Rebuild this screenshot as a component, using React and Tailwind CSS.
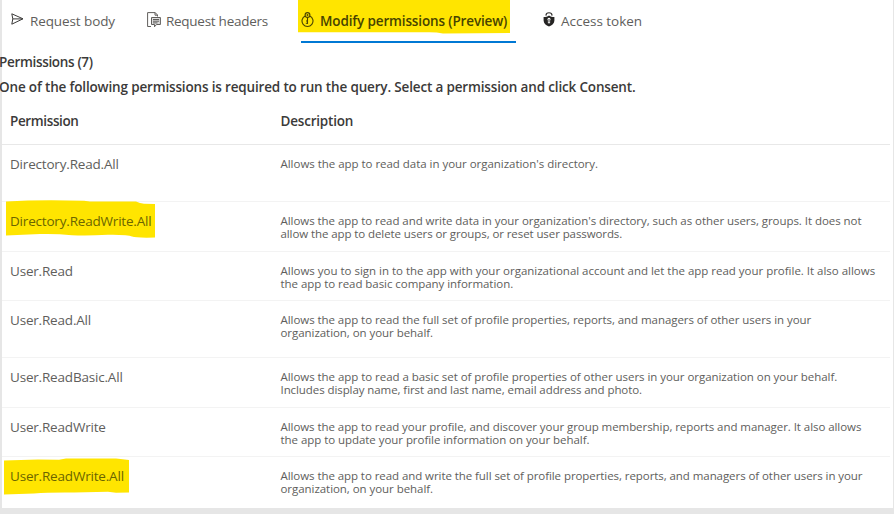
import React from "react";

const rows = [
  { name: "Directory.Read.All", h: "h-[57px]", lines: [["Allows the app to read data in your organization's directory.", "tracking-[-0.03px]"]] },
  {
    name: "Directory.ReadWrite.All",
    h: "h-[50px]",
    mark: "directory",
    lines: [
      ["Allows the app to read and write data in your organization's directory, such as other users, groups. It does not", "tracking-[-0.052px]"],
      ["allow the app to delete users or groups, or reset user passwords.", "tracking-[-0.09px]"],
    ],
  },
  {
    name: "User.Read",
    h: "h-[49px]",
    lines: [
      ["Allows you to sign in to the app with your organizational account and let the app read your profile. It also allows", "tracking-[-0.013px]"],
      ["the app to read basic company information.", "tracking-[-0.05px]"],
    ],
  },
  {
    name: "User.Read.All",
    h: "h-[57px]",
    lines: [
      ["Allows the app to read the full set of profile properties, reports, and managers of other users in your", "tracking-[-0.055px]"],
      ["organization, on your behalf.", "tracking-[-0.05px]"],
    ],
  },
  {
    name: "User.ReadBasic.All",
    h: "h-[50px]",
    lines: [
      ["Allows the app to read a basic set of profile properties of other users in your organization on your behalf.", "tracking-[-0.045px]"],
      ["Includes display name, first and last name, email address and photo.", "tracking-[-0.08px]"],
    ],
  },
  {
    name: "User.ReadWrite",
    h: "h-[49px]",
    lines: [
      ["Allows the app to read your profile, and discover your group membership, reports and manager. It also allows", "tracking-[-0.06px]"],
      ["the app to update your profile information on your behalf.", "tracking-[-0.05px]"],
    ],
  },
  {
    name: "User.ReadWrite.All",
    h: "h-[51px]",
    mark: "user",
    last: true,
    lines: [
      ["Allows the app to read and write the full set of profile properties, reports, and managers of other users in your", "tracking-[-0.07px]"],
      ["organization, on your behalf.", "tracking-[-0.05px]"],
    ],
  },
];

function SendIcon() {
  return (
    <svg className="h-[14px] w-[14px] shrink-0" viewBox="0 0 14 14" fill="none" stroke="#3b3a39" strokeWidth="1">
      <path d="M1.8 .8 13 5.8 1.8 11.2 2.8 5.9ZM2.8 5.9H12.5" />
    </svg>
  );
}

function HeadersIcon() {
  return (
    <svg className="h-[16px] w-[14px] shrink-0" viewBox="0 0 14 16" fill="none" stroke="#605e5c" strokeWidth="1">
      <path d="M4 14.5H.6V.6H8.2L10.5 3V4.5M8 .6V3.2H10.5" />
      <path d="M4.5 5.5H13.4V12.5H9.5L7.5 14.8V12.5H4.5Z" fill="#dedede" />
      <path d="M6 7.5H12M6 9.2H12M6 10.9H10.5" />
    </svg>
  );
}

function KeyIcon() {
  return (
    <svg className="h-[16px] w-[13px] shrink-0" viewBox="0 0 13 16" fill="none" stroke="#4a4400" strokeWidth="1.1">
      <path d="M4.3 3.9A5.5 5.5 0 1 0 8.7 3.9" />
      <circle cx="6.5" cy="3" r="2.4" />
      <path d="M6.5 5.4V12M6.5 11.2H4.8M6.5 9H5" />
      <circle cx="6.5" cy="3" r=".4" />
    </svg>
  );
}

function ShieldIcon() {
  return (
    <svg className="h-[15px] w-[12px] shrink-0" viewBox="0 0 12 15" fill="none">
      <path d="M2.9 3.6C3 1.7 4.2.8 6 .8S9 1.7 9.1 3.6" stroke="#323130" strokeWidth="1.1" />
      <path d="M6 3.4C7.5 4.5 9.4 4.9 11.4 5V8.4C11.4 11.4 9 13.3 6 14.6 3 13.3 .6 11.4 .6 8.4V5C2.6 4.9 4.5 4.5 6 3.4Z" fill="#252423" />
      <path d="M6 5.8A1.6 1.6 0 0 1 7.1 8.5V11.2H4.9V8.5A1.6 1.6 0 0 1 6 5.8Z" fill="#fff" />
      <path d="M6 7V10.4" stroke="#323130" strokeWidth=".9" />
    </svg>
  );
}

function Mark({ kind }) {
  if (kind === "directory") {
    return (
      <svg className="absolute -left-1 -top-[2px] h-[38px] w-[150px]" viewBox="0 0 150 38" fill="#ffe500">
        <path d="M0 1.5Q35-.5 78 .8L84 1.5 130 1.6Q134 3.5 138 3.8L149 4V37.5Q130 38 126 36.5 122 34.5 102 34.8 80 36 66 35.2 50 33.5 34 34L0 35.5Z" />
      </svg>
    );
  }
  return (
    <svg className="absolute -left-[6px] top-px h-[38px] w-[125px]" viewBox="0 0 125 38" fill="#ffe500">
      <path d="M0 2.5L34 1.5 55 1.8 62 .6 112 .5Q119 1.2 125 2V34.5L112 34.8 104 33.8 70 34.5Q45 34.2 30 35.5L0 36.5Z" />
    </svg>
  );
}

export default function App() {
  return (
    <div className="h-[514px] w-[894px] overflow-hidden border-b-[6px] border-[#e6e6e6] bg-white font-['Open_Sans','Noto_Sans',sans-serif] text-[13.5px] text-[#3b3a39]">
      <div className="h-[508px] border-l-2 border-r border-[#e6e6e6]">
        <nav className="flex h-[43px] text-[#605e5c]">
          <div className="ml-2 flex w-[137px] items-start gap-[6px] pt-[13px]">
            <SendIcon />
            <span className="leading-4 tracking-[-0.1px]">Request body</span>
          </div>
          <div className="flex w-[151px] items-start gap-[5px] pt-[12px]">
            <HeadersIcon />
            <span className="pt-px leading-4 tracking-[-0.27px]">Request headers</span>
          </div>
          <div className="relative h-[43px] w-[222px]">
            <svg className="absolute left-0 top-0 h-[34px] w-[213px]" viewBox="0 0 213 34" fill="#ffe500">
              <path d="M0 0H212V33L145 33.4Q138 32 128 32.3H0Z" />
            </svg>
            <div className="relative ml-[3px] flex h-[43px] w-[215px] items-start gap-[6px] border-b-2 border-[#0078d4] pt-[12px]">
              <KeyIcon />
              <span className="whitespace-nowrap pt-px font-semibold leading-4 tracking-[-0.14px] text-[#474300]">Modify permissions (Preview)</span>
            </div>
          </div>
          <div className="ml-[23px] flex items-start gap-[6px] pt-[12px]">
            <ShieldIcon />
            <span className="pt-px leading-4 tracking-[-0.02px]">Access token</span>
          </div>
        </nav>
        <div className="-ml-[3px] whitespace-nowrap pt-[11px] font-semibold">
          <h2 className="leading-4 tracking-[-0.33px]">Permissions (7)</h2>
          <p className="mt-[9px] leading-4 tracking-[-0.162px]">One of the following permissions is required to run the query. Select a permission and click Consent.</p>
        </div>
        <div className="w-[888px]">
          <div className="flex h-[50px] border-b border-[#e8e8e8] pl-2 pt-[18px] font-semibold leading-4">
            <span className="w-[270.5px] tracking-[-0.37px]">Permission</span>
            <span className="tracking-[-0.2px]">Description</span>
          </div>
          {rows.map((r) => (
            <div key={r.name} className={`flex pl-2 pt-[11px] text-[#605e5c] ${r.h} ${r.last ? "" : "border-b border-[#f3f3f3]"}`}>
              <div className="w-[270.5px]">
                <div className="relative -mt-[11px] pt-[11px] leading-4">
                  {r.mark && <Mark kind={r.mark} />}
                  <span className={`relative tracking-[-0.19px] ${r.mark ? "text-[#6b6500]" : ""}`}>{r.name}</span>
                </div>
              </div>
              <div className="whitespace-nowrap pt-[2px] text-[11.5px] leading-[12.5px]">
                {r.lines.map(([t, tracking]) => (
                  <div key={t} className={tracking}>{t}</div>
                ))}
              </div>
            </div>
          ))}
        </div>
      </div>
    </div>
  );
}
